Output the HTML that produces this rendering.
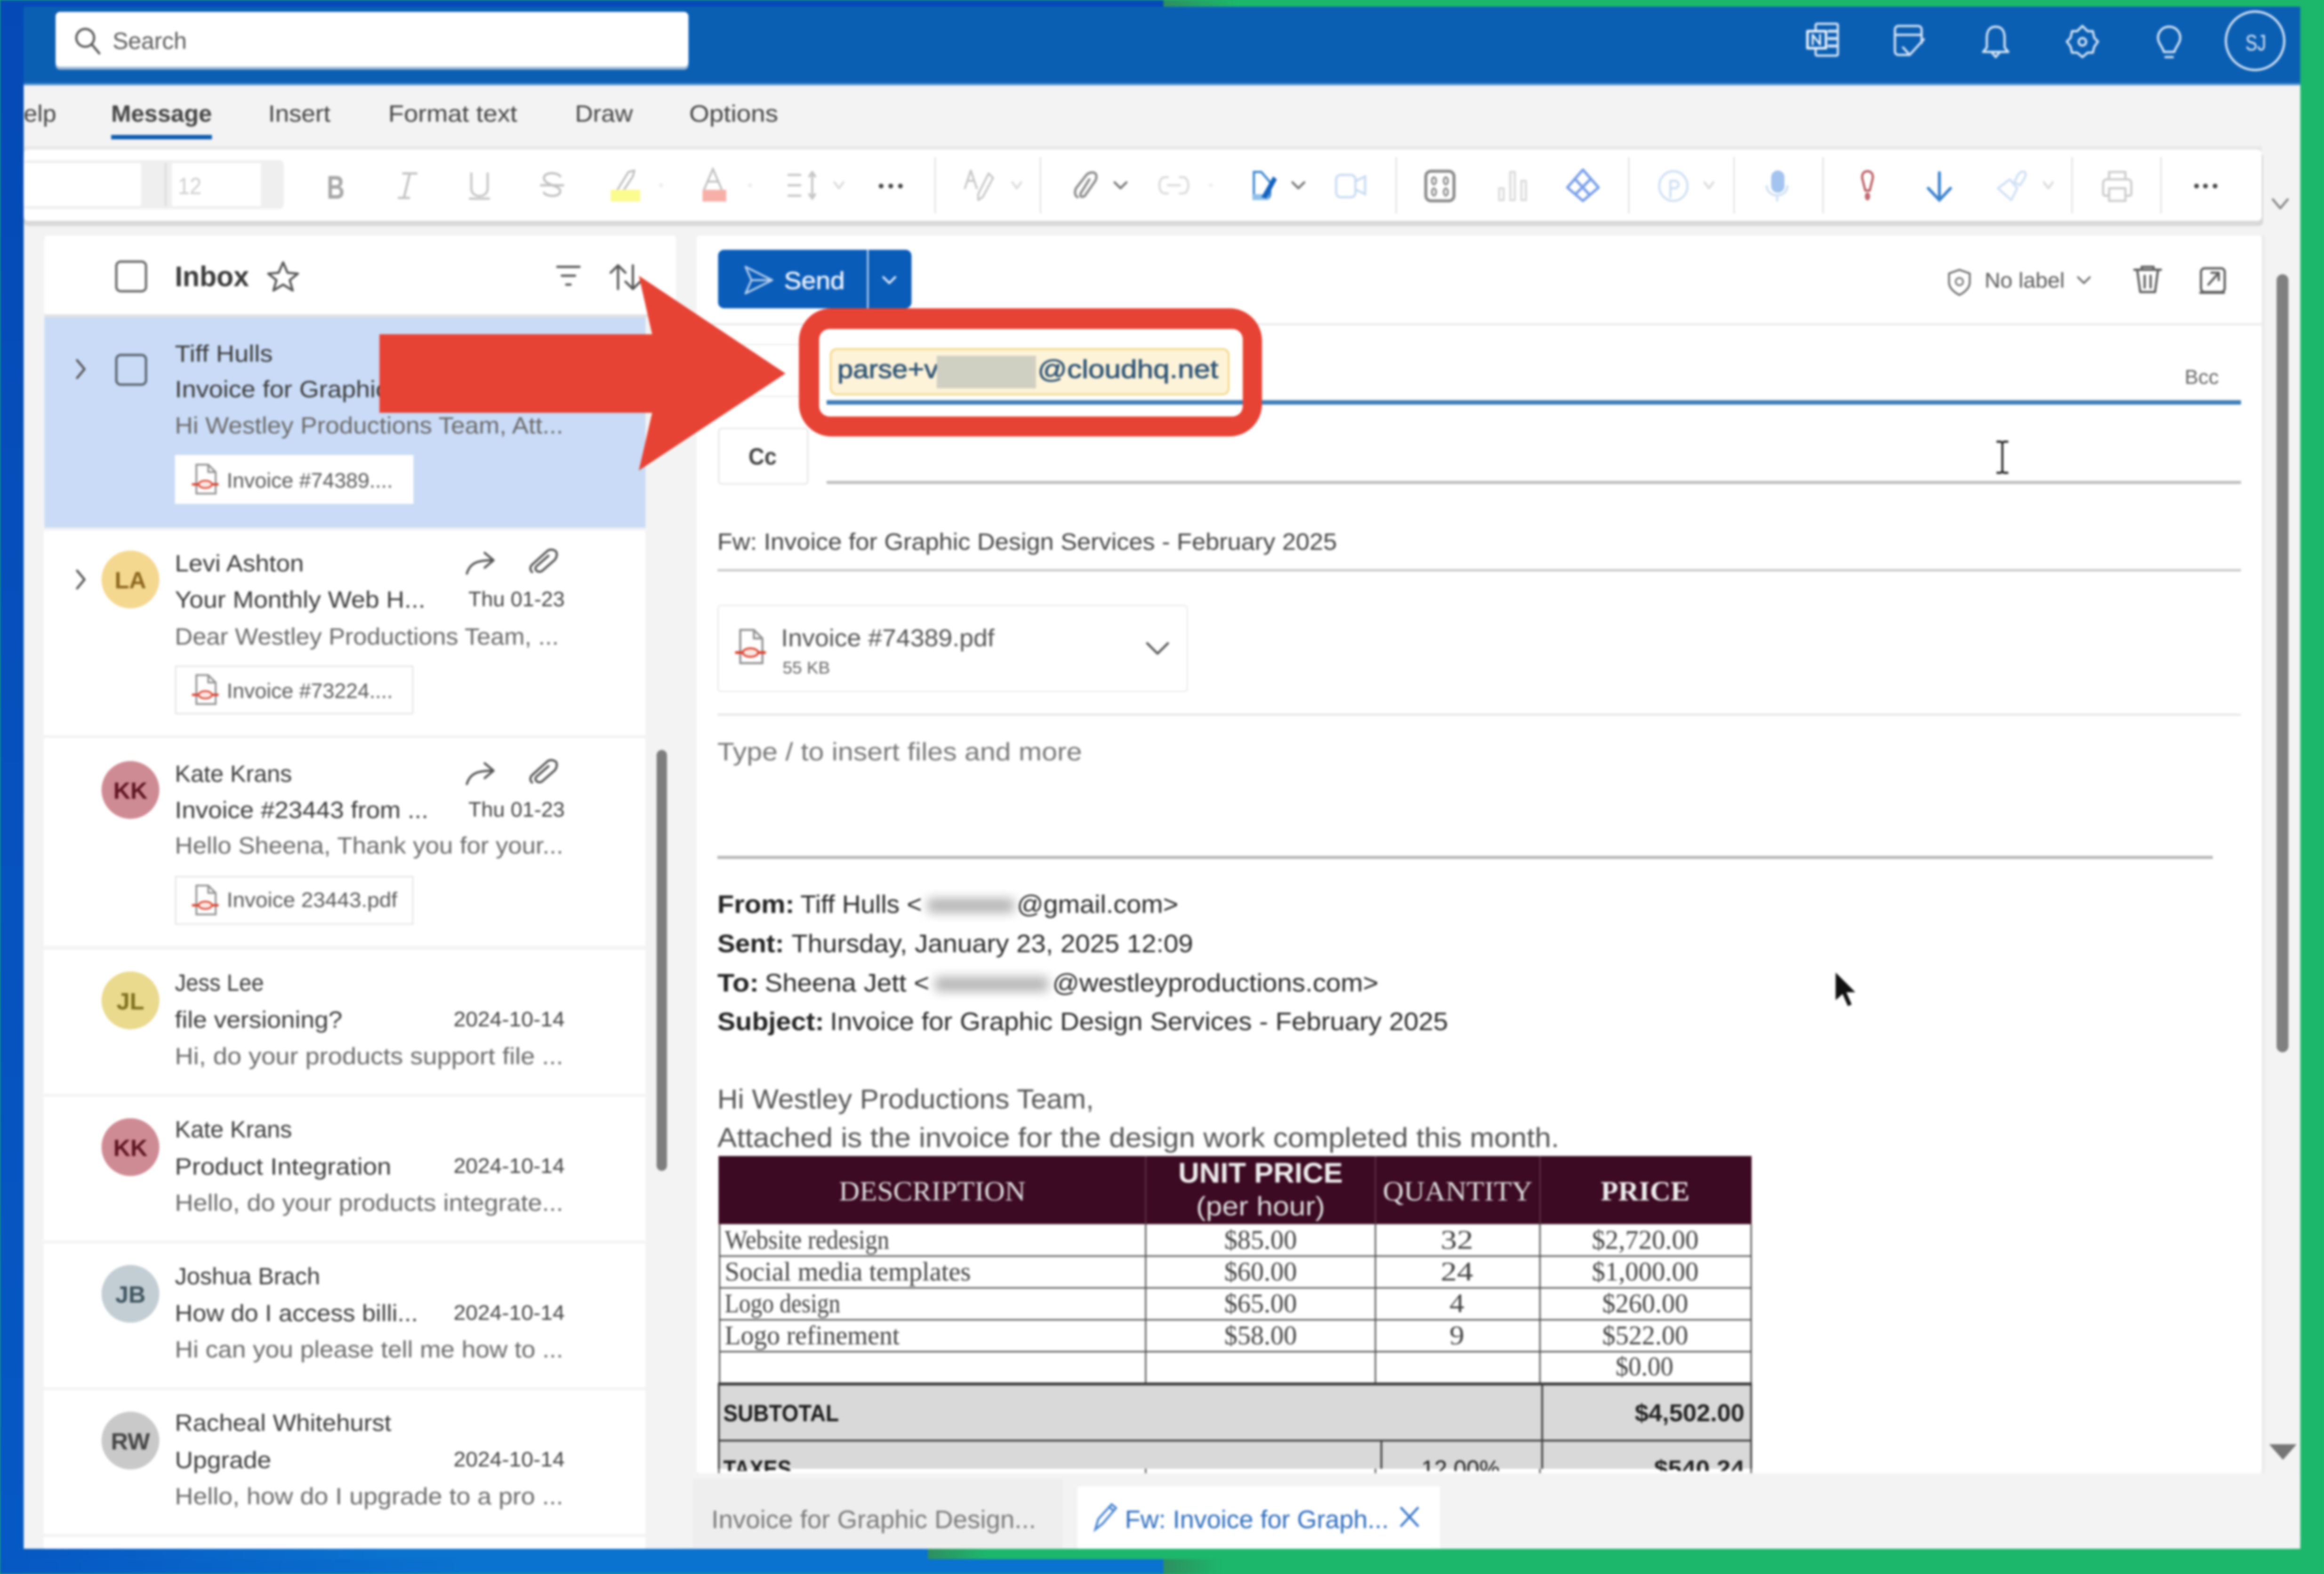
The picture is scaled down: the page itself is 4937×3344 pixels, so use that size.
<!DOCTYPE html>
<html><head><meta charset="utf-8"><title>Outlook compose</title>
<style>
html,body{margin:0;padding:0;width:4937px;height:3344px;overflow:hidden;background:#1cb76b}
svg{display:block;width:4937px;height:3344px;filter:blur(2.4px)}
text{font-family:"Liberation Sans",sans-serif;font-size:16px;fill:#3a3a3a}
.tab{font-size:16px;fill:#444}
.s{font-size:16px;fill:#3b3b3b}
.p{font-size:16px;fill:#6a6a6a}
.c{font-size:14px;fill:#5a5a5a}
.d{font-size:14px;fill:#444}
.av{font-size:16px;font-weight:bold;text-anchor:middle}
.b{font-size:17px;fill:#2a2a2a}
.bb{font-size:17px;font-weight:bold;fill:#222}
.g{font-size:18.5px;fill:#555}
.r{font-family:"Liberation Serif",serif;font-size:18px;fill:#444}
.rc{font-family:"Liberation Serif",serif;font-size:18px;fill:#444}
.h{font-family:"Liberation Serif",serif;font-size:19px;fill:#ddd}
.ic{fill:none;stroke:#555;stroke-width:1.5;stroke-linecap:round;stroke-linejoin:round}
.tb{fill:none;stroke:#b5b5b5;stroke-width:1.5;stroke-linecap:round;stroke-linejoin:round}
.lt{fill:none;stroke:#cfe0f4;stroke-width:1.5;stroke-linecap:round;stroke-linejoin:round}
.gy{fill:none;stroke:#dcdcdc;stroke-width:1.5;stroke-linecap:round;stroke-linejoin:round}
.wh{fill:none;stroke:#d6e5f6;stroke-width:1.5;stroke-linecap:round;stroke-linejoin:round}
.sep{stroke:#e2e2e2;stroke-width:1}
.ln{stroke:#555;stroke-width:1}
</style></head>
<body>
<svg xmlns="http://www.w3.org/2000/svg" viewBox="0 0 1568 1062">
<defs>
<linearGradient id="lf" x1="0" y1="0" x2="0" y2="1"><stop offset="0" stop-color="#0549b6"/><stop offset="1" stop-color="#0658c4"/></linearGradient>
<linearGradient id="bt" x1="0" y1="0" x2="1" y2="0"><stop offset="0" stop-color="#0657c2"/><stop offset="0.4" stop-color="#0a72cf"/><stop offset="1" stop-color="#0a72cf"/></linearGradient>
<linearGradient id="tg" x1="0" y1="0" x2="1" y2="0"><stop offset="0" stop-color="#2e8f60"/><stop offset="1" stop-color="#1cb76b"/></linearGradient>
<filter id="bl" x="-30%" y="-60%" width="160%" height="220%"><feGaussianBlur stdDeviation="3.5"/></filter>
<clipPath id="body"><rect x="470" y="159" width="1056" height="833.500"/></clipPath>
<clipPath id="left"><rect x="16" y="57" width="600" height="40"/></clipPath>
<g id="pdf">
<path d="M3 0h8l5 5v14.500H3z" fill="#fff" stroke="#909090" stroke-width="1.200"/>
<path d="M11 0v5h5" fill="none" stroke="#909090" stroke-width="1.200"/>
<rect x="0" y="12.500" width="18" height="1.600" fill="#d9432f"/>
<ellipse cx="9" cy="13.300" rx="4.500" ry="2.500" fill="#fbe6e2" stroke="#d9432f" stroke-width="1.100"/>
</g>
<g id="fwd"><path class="ic" d="M-9 7C-7 0-2-2 8-2M3-7l6 5-6 5"/></g>
<g id="clip"><path class="ic" d="M-8 7c-2-2-1-4 0-5L2-7c2-2 5-1 6 0s1 4-1 6L-1 6c-1 1-3 1-4 0s-1-2 0-3L3-4"/></g>
</defs>

<!-- backdrop -->
<rect width="1568" height="1062" fill="#1cb76b"/>
<rect x="785" y="0" width="50" height="5" fill="url(#tg)"/>
<rect x="0" y="0" width="785" height="5" fill="#0549b6"/>
<rect x="0" y="0" width="16" height="1062" fill="url(#lf)"/>
<rect x="626" y="1045" width="40" height="7" fill="url(#tg)"/>
<rect x="785" y="1052" width="40" height="10" fill="url(#tg)"/>
<rect x="16" y="1045" width="610" height="7" fill="url(#bt)"/>
<rect x="0" y="1052" width="785" height="10" fill="url(#bt)"/>

<!-- window -->
<rect x="16" y="57" width="1536" height="988" fill="#f3f3f3"/>
<rect x="1546" y="1039" width="6" height="6" fill="#111"/>
<path d="M1552 1039v0a6 6 0 0 1-6 6h-2v-8h8z" fill="#f3f3f3"/>
<rect x="16" y="4.500" width="1536" height="52.500" fill="#0b5fb3"/>
<rect x="16" y="56" width="1536" height="1.500" fill="#4c8fd0"/>

<!-- search -->
<rect x="37.500" y="9" width="427" height="38" rx="3" fill="#9db8d6"/>
<rect x="37.500" y="8" width="427" height="37" rx="3" fill="#fff"/>
<circle cx="57.500" cy="25.500" r="6" class="ic"/><path class="ic" d="M62 30l5 6"/>
<text x="76" y="33" textLength="50" lengthAdjust="spacingAndGlyphs" style="fill:#5c5c5c">Search</text>

<!-- header icons -->
<g class="wh">
<rect x="1225" y="16" width="15" height="21.500" rx="1"/>
<path d="M1234 21h5M1234 26h5M1234 31h5" stroke-width="2"/>
<rect x="1219.500" y="21" width="12.500" height="11.500" fill="#0b5fb3" style="stroke:#eef4fb;stroke-width:1.700"/>
<path d="M1223 30v-6.500l5 6.500v-6.500" style="stroke:#eef4fb;stroke-width:1.300"/>
<path d="M1288 37h-7c-1.500 0-2.500-1-2.500-2.500V20c0-1.500 1-2.500 2.500-2.500h13c1.500 0 2.500 1 2.500 2.500v9M1278.500 23.500h18"/>
<path d="M1284 32l4.500 5 9.500-10.500"/>
<path d="M1346.500 18c-4.500 0-6 3.500-6 7.500v6.500l-2.500 3h17l-2.500-3v-6.500c0-4-1.500-7.500-6-7.500zM1344 35.500l2.500 3 2.500-3"/>
<path d="M1405 17.500l3.500 3.500h3.500l1 4.500 2.500 2.500-2.500 3.500-1 4h-3.500l-3.500 3-3.500-3h-3.500l-1-4-2.500-3.500 2.500-2.500 1-4.500h3.500z"/><circle cx="1405" cy="28.200" r="2.500"/>
<path d="M1463.500 18c-4.500 0-7.500 3.500-7.500 7.500 0 3.500 3 6 4 9.500h7c1-3.500 4-6 4-9.500 0-4-3-7.500-7.500-7.500zM1461 38.500h5"/>
<circle cx="1521.500" cy="27.500" r="19.700"/>
</g>
<text x="1515" y="34" textLength="14" lengthAdjust="spacingAndGlyphs" style="fill:#dbe7f6;font-size:15px">SJ</text>

<!-- tabs -->
<g clip-path="url(#left)">
<text class="tab" x="16" y="82" textLength="22" lengthAdjust="spacingAndGlyphs">elp</text>
<text class="tab" x="75" y="82" textLength="68" lengthAdjust="spacingAndGlyphs" font-weight="bold">Message</text>
<text class="tab" x="181" y="82" textLength="42" lengthAdjust="spacingAndGlyphs">Insert</text>
<text class="tab" x="262" y="82" textLength="87" lengthAdjust="spacingAndGlyphs">Format text</text>
<text class="tab" x="388" y="82" textLength="39" lengthAdjust="spacingAndGlyphs">Draw</text>
<text class="tab" x="465" y="82" textLength="60" lengthAdjust="spacingAndGlyphs">Options</text>
</g>
<rect x="75" y="91" width="68" height="3" fill="#0f5cb0"/>

<!-- toolbar -->
<rect x="16" y="98.500" width="1510" height="4" fill="#e8e8e8"/>
<rect x="16" y="103" width="1511" height="49.500" rx="3" fill="#d8d8d8"/>
<rect x="16" y="101" width="1510" height="48" rx="3" fill="#fff"/>
<rect x="16" y="108" width="175.500" height="33" rx="3" fill="#efefef"/>
<rect x="16" y="110" width="79" height="29" fill="#fff"/>
<rect x="116" y="110" width="60" height="29" fill="#fff"/>
<rect x="111" y="110" width="1.500" height="29" fill="#dedede"/>
<text x="120" y="131" textLength="16" lengthAdjust="spacingAndGlyphs" style="fill:#cfcfcf;font-size:16px">12</text>
<text x="220.500" y="134" style="fill:#a6a6a6;font-size:22px;font-weight:bold" textLength="12" lengthAdjust="spacingAndGlyphs">B</text>
<path class="tb" d="M272 117h9M269 133.500h7M276.500 117l-4 16.500" style="stroke:#c0c0c0"/>
<path class="tb" d="M318 117v10c0 7 11 7 11 0v-10M317 134h13" style="stroke:#c6c6c6"/>
<path class="tb" d="M378 119c-2-3-11-3-11 1 0 5 11 5 11 9 0 4-9 4-11 1M365 125h15" style="stroke:#c0c0c0"/>
<path class="tb" d="M428 115l-4 1-8 13-1 4 4-2 8-12z" style="stroke:#bdbdbd;stroke-width:1.300"/><rect x="412" y="128" width="20" height="8" fill="#fbfb90"/>
<path d="M475 128l6-14 6 14M477.500 122.500h7" fill="none" stroke="#bfbfbf" stroke-width="1.300"/><rect x="474" y="128" width="16" height="8" fill="#f7b0a8"/>
<circle cx="446" cy="125" r="1.500" fill="#eee"/><circle cx="506" cy="125" r="1.500" fill="#eee"/>
<path class="tb" d="M532 118h8M532 125h8M532 132h8M548 116v18M546 119l2-3 2 3M546 131l2 3 2-3" style="stroke:#c6c6c6"/>
<path class="gy" d="M563 123l3 4 3-4"/>
<circle cx="594.500" cy="125.500" r="1.600" fill="#444"/><circle cx="601" cy="125.500" r="1.600" fill="#444"/><circle cx="607.500" cy="125.500" r="1.600" fill="#444"/>
<path class="sep" d="M631 106v38M702 106v38M942 106v38M1099 106v38M1170 106v38M1230 106v38M1398 106v38M1458 106v38"/>
<path class="tb" d="M651 127l4-12 4 12M653 122h4M667 117l3 3-7 13-3 2 0-4z" style="stroke:#c6c6c6;stroke-width:1.300"/>
<path class="gy" d="M683 123l3 4 3-4"/>
<path d="M727 133c-2-1-2-4-1-6l7-9c2-2 5-2 6-1s1 3 0 5l-7 10c-1 1-3 1-3 0s0-2 1-3l5-8" fill="none" stroke="#8a8a8a" stroke-width="1.600" stroke-linecap="round"/>
<path class="ic" style="stroke:#777" d="M752 123l4 4 4-4"/>
<path class="gy" d="M788 119.500h-2c-5 0-5 11 0 11h2M796 119.500h2c5 0 5 11 0 11h-2M788 125h8"/>
<circle cx="817" cy="125" r="1.500" fill="#f0f0f0"/>
<path d="M846 116h5l6 7v7c0 3-1 4-3 4h-8z" fill="#fff" stroke="#3b86cf" stroke-width="1.500"/><path d="M845 131h11v4h-11z" fill="#8fc0ea"/><path d="M851 133l8-14 2.500 2-7 13z" fill="#1462bd"/>
<path class="ic" style="stroke:#777" d="M872 123l4 4 4-4"/>
<rect x="901.500" y="118" width="13" height="15" rx="3" fill="none" stroke="#c8dcf2" stroke-width="1.500"/><path d="M915 122l6-3v12l-6-3" fill="none" stroke="#c8dcf2" stroke-width="1.500"/>
<rect x="962" y="115.500" width="19" height="20" rx="3.500" fill="none" stroke="#888" stroke-width="2"/><g fill="none" stroke="#888" stroke-width="1.200"><ellipse cx="967.500" cy="122" rx="1.400" ry="2.400"/><ellipse cx="975.500" cy="122" rx="1.400" ry="2.400"/><ellipse cx="967.500" cy="129.500" rx="1.400" ry="2.400"/><ellipse cx="975.500" cy="129.500" rx="1.400" ry="2.400"/></g>
<path class="gy" d="M1011.500 127h3v8h-3zM1019 116h3v19h-3zM1026.500 122h3v13h-3z"/>
<path d="M1068 114.500l10.500 12-10.500 9-10.500-9zM1062 120l11 12M1074 120l-11 11" fill="none" stroke="#7ba0e8" stroke-width="1.800" stroke-linejoin="round"/>
<ellipse cx="1129" cy="125.500" rx="9.500" ry="10" class="lt"/><path class="lt" d="M1127 133v-11h3a2.500 2.500 0 0 1 0 5h-3"/>
<path class="gy" d="M1150 123l3 4 3-4"/>
<rect x="1195" y="115" width="9" height="15" rx="4.500" fill="#a3c4ee"/><path d="M1192 125c0 9 14 9 14 0M1199 132v4" fill="none" stroke="#cfe0f4" stroke-width="1.500"/>
<path d="M1260 115.500c-2.500 0-4 2-3.500 5l2 8h3l2-8c.5-3-1-5-3.500-5z" fill="none" stroke="#b85a5f" stroke-width="1.500"/><ellipse cx="1260" cy="132.500" rx="1.800" ry="2.700" fill="#c06a70"/>
<path d="M1308.500 116.500v18M1301 127l7.500 8 7.500-8" fill="none" stroke="#3b82cc" stroke-width="2" stroke-linecap="round"/>
<path class="lt" d="M1366 116c-2-1-4 1-5 3l-2 4 4 2 3-5c1-2 1-3 0-4zM1356 121l-8 6 9 8 4-8z"/>
<path class="gy" d="M1379 123l3 4 3-4"/>
<path class="gy" style="stroke:#cdcdcd" d="M1423 121v-5h11v5M1423 132h-2.500c-1 0-1.500-.5-1.500-1.500v-7c0-1.500 1-2.500 2.500-2.500h14c1.500 0 2.500 1 2.500 2.500v7c0 1-.5 1.500-1.500 1.500H1434M1423 127h11v8.500h-11z"/>
<circle cx="1482" cy="125.500" r="1.600" fill="#444"/><circle cx="1488" cy="125.500" r="1.600" fill="#444"/><circle cx="1494.500" cy="125.500" r="1.600" fill="#444"/>
<path class="ic" style="stroke:#888" d="M1533.500 134.500l5 6 5-6"/>

<!-- LEFT PANE -->
<rect x="30" y="159" width="427" height="886" fill="#f3f3f3"/>
<rect x="30" y="159" width="426" height="54" rx="2" fill="#fff"/>
<rect x="30" y="212" width="426" height="2" fill="#e2e2e2"/>
<rect x="78.500" y="176.500" width="20" height="20" rx="3" fill="#fff" stroke="#6b6b6b" stroke-width="1.600"/>
<text x="118" y="193" textLength="50" lengthAdjust="spacingAndGlyphs" font-weight="bold" style="font-size:19px;fill:#3a3a3a">Inbox</text>
<path class="ic" d="M191 177l3 7 7 .6-5.500 4.400 2 7-6.500-4-6.500 4 2-7-5.500-4.400 7-.6z"/>
<path class="ic" d="M376 180h15M379 186h9M382 192h3" stroke-width="2"/>
<path class="ic" d="M417 195v-16M412 184l5-5 5 5M427 179v16M422 190l5 5 5-5"/>

<rect x="30" y="214" width="405.500" height="142" fill="#c9dbf6"/>
<rect x="29.500" y="358" width="406" height="138" fill="#fff"/>
<rect x="29.500" y="498" width="406" height="140" fill="#fff"/>
<rect x="29.500" y="641" width="406" height="97" fill="#fff"/>
<rect x="29.500" y="740" width="406" height="97" fill="#fff"/>
<rect x="29.500" y="839" width="406" height="97" fill="#fff"/>
<rect x="29.500" y="938" width="406" height="97" fill="#fff"/>
<rect x="29.500" y="1037" width="406" height="8" fill="#fff"/>
<rect x="443" y="506" width="7" height="284" rx="3.500" fill="#7e7e7e"/>

<path class="ic" d="M52 243l5 6-5 6M52 385l5 6-5 6"/>
<rect x="78.500" y="239.500" width="20" height="20" rx="3" fill="none" stroke="#5c6470" stroke-width="1.600"/>

<!-- selected -->
<text class="s" x="118" y="244" textLength="66" lengthAdjust="spacingAndGlyphs">Tiff Hulls</text>
<text class="s" x="118" y="268" textLength="144" lengthAdjust="spacingAndGlyphs">Invoice for Graphic</text>
<text class="p" x="118" y="292.500" textLength="262" lengthAdjust="spacingAndGlyphs">Hi Westley Productions Team, Att...</text>
<rect x="118" y="307" width="161" height="33" fill="#fff"/>
<use href="#pdf" transform="translate(129.500,313.500)"/>
<text class="c" x="153" y="329" textLength="112" lengthAdjust="spacingAndGlyphs">Invoice #74389....</text>

<!-- Levi -->
<circle cx="88" cy="391" r="19.500" fill="#f5d88f"/><text class="av" x="88" y="397" style="fill:#8d661d">LA</text>
<text class="s" x="118" y="385.500" textLength="87" lengthAdjust="spacingAndGlyphs">Levi Ashton</text>
<text class="s" x="118" y="410" textLength="169" lengthAdjust="spacingAndGlyphs">Your Monthly Web H...</text>
<text class="d" x="316" y="409" textLength="65" lengthAdjust="spacingAndGlyphs">Thu 01-23</text>
<text class="p" x="118" y="435" textLength="259" lengthAdjust="spacingAndGlyphs">Dear Westley Productions Team, ...</text>
<use href="#fwd" transform="translate(324,380)"/><use href="#clip" transform="translate(367,379)"/>
<rect x="118.500" y="449.500" width="160" height="32" fill="#fff" stroke="#e6e6e6"/>
<use href="#pdf" transform="translate(129.500,455.500)"/>
<text class="c" x="153" y="471" textLength="112" lengthAdjust="spacingAndGlyphs">Invoice #73224....</text>

<!-- Kate -->
<circle cx="88" cy="533" r="19.500" fill="#cf8b94"/><text class="av" x="88" y="539" style="fill:#5f1522">KK</text>
<text class="s" x="118" y="527.500" textLength="79" lengthAdjust="spacingAndGlyphs">Kate Krans</text>
<text class="s" x="118" y="552" textLength="171" lengthAdjust="spacingAndGlyphs">Invoice #23443 from ...</text>
<text class="d" x="316" y="551" textLength="65" lengthAdjust="spacingAndGlyphs">Thu 01-23</text>
<text class="p" x="118" y="576" textLength="262" lengthAdjust="spacingAndGlyphs">Hello Sheena, Thank you for your...</text>
<use href="#fwd" transform="translate(324,522)"/><use href="#clip" transform="translate(367,521)"/>
<rect x="118.500" y="591.500" width="160" height="32" fill="#fff" stroke="#e6e6e6"/>
<use href="#pdf" transform="translate(129.500,597.500)"/>
<text class="c" x="153" y="612" textLength="115" lengthAdjust="spacingAndGlyphs">Invoice 23443.pdf</text>

<!-- Jess -->
<circle cx="88" cy="675" r="19.500" fill="#e9da8d"/><text class="av" x="88" y="681" style="fill:#7c6f1c">JL</text>
<text class="s" x="118" y="668.500" textLength="60" lengthAdjust="spacingAndGlyphs">Jess Lee</text>
<text class="s" x="118" y="693.500" textLength="113" lengthAdjust="spacingAndGlyphs">file versioning?</text>
<text class="d" x="306" y="692.500" textLength="75" lengthAdjust="spacingAndGlyphs">2024-10-14</text>
<text class="p" x="118" y="718" textLength="262" lengthAdjust="spacingAndGlyphs">Hi, do your products support file ...</text>

<!-- Kate 2 -->
<circle cx="88" cy="774" r="19.500" fill="#cf8b94"/><text class="av" x="88" y="780" style="fill:#5f1522">KK</text>
<text class="s" x="118" y="767.500" textLength="79" lengthAdjust="spacingAndGlyphs">Kate Krans</text>
<text class="s" x="118" y="792.500" textLength="146" lengthAdjust="spacingAndGlyphs">Product Integration</text>
<text class="d" x="306" y="791.500" textLength="75" lengthAdjust="spacingAndGlyphs">2024-10-14</text>
<text class="p" x="118" y="817" textLength="262" lengthAdjust="spacingAndGlyphs">Hello, do your products integrate...</text>

<!-- Joshua -->
<circle cx="88" cy="873" r="19.500" fill="#c3ced4"/><text class="av" x="88" y="879" style="fill:#3f5560">JB</text>
<text class="s" x="118" y="866.500" textLength="98" lengthAdjust="spacingAndGlyphs">Joshua Brach</text>
<text class="s" x="118" y="891.500" textLength="164" lengthAdjust="spacingAndGlyphs">How do I access billi...</text>
<text class="d" x="306" y="890.500" textLength="75" lengthAdjust="spacingAndGlyphs">2024-10-14</text>
<text class="p" x="118" y="916" textLength="262" lengthAdjust="spacingAndGlyphs">Hi can you please tell me how to ...</text>

<!-- Racheal -->
<circle cx="88" cy="972" r="19.500" fill="#c9c9c9"/><text class="av" x="88" y="978" style="fill:#444">RW</text>
<text class="s" x="118" y="965.500" textLength="146" lengthAdjust="spacingAndGlyphs">Racheal Whitehurst</text>
<text class="s" x="118" y="990.500" textLength="65" lengthAdjust="spacingAndGlyphs">Upgrade</text>
<text class="d" x="306" y="989.500" textLength="75" lengthAdjust="spacingAndGlyphs">2024-10-14</text>
<text class="p" x="118" y="1015" textLength="262" lengthAdjust="spacingAndGlyphs">Hello, how do I upgrade to a pro ...</text>

<!-- COMPOSE -->
<rect x="470" y="159" width="1056" height="835" rx="2" fill="#fff"/>
<rect x="470" y="218" width="1056" height="1.500" fill="#ececec"/>
<rect x="484.500" y="168.500" width="130.500" height="39.500" rx="4" fill="#0a5cb9"/>
<rect x="585" y="168.500" width="1" height="39.500" fill="#cfe0f3"/>
<path class="wh" d="M503 180l18 9-18 9 4-9zM507 189h14" style="stroke-width:1.300;stroke:#b5d0ec"/>
<text x="529" y="195" textLength="41" lengthAdjust="spacingAndGlyphs" style="fill:#e8f0fa;font-size:16.500px;stroke:#e8f0fa;stroke-width:.3">Send</text>
<path class="wh" d="M596 187l4 4 4-4"/>

<path class="ic" style="stroke:#666;stroke-width:1.200" d="M1322 182l7 2.500v6c0 4-4 7-7 8.500-3-1.500-7-4.500-7-8.500v-6z"/><circle cx="1322" cy="190" r="2.500" fill="none" stroke="#666"/>
<text x="1339" y="194" textLength="54" lengthAdjust="spacingAndGlyphs" style="font-size:14.500px;fill:#5a5a5a">No label</text>
<path class="ic" style="stroke:#666;stroke-width:1.200" d="M1402 187l4 4 4-4"/>
<path class="ic" style="stroke:#5c5c5c" d="M1440 182h18M1445 182v-2h8v2M1442 182l2 15h10l2-15M1447 186v8M1451 186v8"/>
<rect x="1485" y="181" width="16" height="16" rx="2.500" class="ic" style="stroke:#5c5c5c"/><path class="ic" style="stroke:#5c5c5c" d="M1490 192l7-8M1492 184h5v5M1484.500 197.500h16"/>

<!-- fields -->
<rect x="484.500" y="232.500" width="60" height="35" rx="2" fill="#fff" stroke="#eeeeee"/>
<rect x="485" y="289" width="60" height="37.500" rx="2" fill="#fff" stroke="#e7e7e7"/>
<text x="505" y="313.500" textLength="19" lengthAdjust="spacingAndGlyphs" font-weight="bold" style="fill:#444;font-size:16px">Cc</text>
<rect x="557.700" y="270" width="954.300" height="3" fill="#3f7db8"/>
<text x="1474" y="259" textLength="23" lengthAdjust="spacingAndGlyphs" style="font-size:13.500px;fill:#666">Bcc</text>
<rect x="557.700" y="324.500" width="954.300" height="2" fill="#bdbdbd"/>
<path d="M1347 298h3l1 1 1-1h3M1351 299v19M1347 319h3l1-1 1 1h3" fill="none" stroke="#222" stroke-width="1.400"/>
<text x="484" y="371" textLength="418" lengthAdjust="spacingAndGlyphs" style="fill:#444">Fw: Invoice for Graphic Design Services - February 2025</text>
<rect x="484" y="384" width="1028" height="1.500" fill="#c6c6c6"/>

<rect x="484.500" y="408.500" width="316.500" height="58" rx="2" fill="#fff" stroke="#ededed"/>
<use href="#pdf" transform="translate(496,425)scale(1.150)"/>
<text x="527" y="436" textLength="144" lengthAdjust="spacingAndGlyphs" style="fill:#555;font-size:16.500px">Invoice #74389.pdf</text>
<text x="528" y="454.500" textLength="32" lengthAdjust="spacingAndGlyphs" style="fill:#666;font-size:11.500px">55 KB</text>
<path class="ic" d="M774 434l7 7 7-7"/>
<rect x="484" y="481.500" width="1028" height="1.500" fill="#e9e9e9"/>
<text x="484" y="513" textLength="246" lengthAdjust="spacingAndGlyphs" style="fill:#777;font-size:17px">Type / to insert files and more</text>
<rect x="484" y="577.500" width="1009" height="2" fill="#b5b5b5"/>

<!-- quoted -->
<text class="bb" x="484" y="616" textLength="52" lengthAdjust="spacingAndGlyphs">From:</text>
<text class="b" x="540" y="616" textLength="82" lengthAdjust="spacingAndGlyphs">Tiff Hulls &lt;</text>
<rect x="626" y="606" width="58" height="10" fill="#b5b5b5" filter="url(#bl)"/>
<text class="b" x="686" y="616" textLength="109" lengthAdjust="spacingAndGlyphs">@gmail.com&gt;</text>
<text class="bb" x="484" y="642.500" textLength="45" lengthAdjust="spacingAndGlyphs">Sent:</text>
<text class="b" x="534" y="642.500" textLength="271" lengthAdjust="spacingAndGlyphs">Thursday, January 23, 2025 12:09</text>
<text class="bb" x="484" y="669" textLength="28" lengthAdjust="spacingAndGlyphs">To:</text>
<text class="b" x="516" y="669" textLength="111" lengthAdjust="spacingAndGlyphs">Sheena Jett &lt;</text>
<rect x="631" y="659" width="76" height="10" fill="#b5b5b5" filter="url(#bl)"/>
<text class="b" x="710" y="669" textLength="220" lengthAdjust="spacingAndGlyphs">@westleyproductions.com&gt;</text>
<text class="bb" x="484" y="695" textLength="72" lengthAdjust="spacingAndGlyphs">Subject:</text>
<text class="b" x="560" y="695" textLength="417" lengthAdjust="spacingAndGlyphs">Invoice for Graphic Design Services - February 2025</text>
<text class="g" x="484" y="748" textLength="254" lengthAdjust="spacingAndGlyphs">Hi Westley Productions Team,</text>
<text class="g" x="484" y="774" textLength="568" lengthAdjust="spacingAndGlyphs">Attached is the invoice for the design work completed this month.</text>

<!-- invoice table -->
<path d="M485 985v9M773 990v4M928 990v4M1039 990v4M1181.500 985v9" stroke="#555" stroke-width="1"/>
<g clip-path="url(#body)">
<rect x="484.800" y="780" width="697" height="46" fill="#3c0a22"/>
<path d="M773 780v46M928 780v46M1039 780v46" stroke="#5a3044" stroke-width="1"/>
<text class="h" x="566" y="810" textLength="126" lengthAdjust="spacingAndGlyphs">DESCRIPTION</text>
<text x="795" y="798" textLength="111" lengthAdjust="spacingAndGlyphs" font-weight="bold" style="fill:#eee;font-size:19px">UNIT PRICE</text>
<text x="807" y="820" textLength="87" lengthAdjust="spacingAndGlyphs" style="fill:#ddd;font-size:18px">(per hour)</text>
<text class="h" x="933" y="810" textLength="101" lengthAdjust="spacingAndGlyphs">QUANTITY</text>
<text class="h" x="1080" y="810" textLength="60" lengthAdjust="spacingAndGlyphs" font-weight="bold" style="fill:#eee">PRICE</text>
<rect x="485" y="826" width="696.500" height="107.500" fill="#fff"/>
<path class="ln" d="M485.500 826v107M773 826v107M928 826v107M1039 826v107M1181.500 826v107M485 847.500h697M485 869h697M485 890.500h697M485 912h697" stroke="#555"/>

<text class="r" x="489" y="842.500" textLength="111" lengthAdjust="spacingAndGlyphs">Website redesign</text>
<text class="rc" x="826" y="842.500" textLength="49" lengthAdjust="spacingAndGlyphs">$85.00</text>
<text class="rc" x="972" y="842.500" textLength="22" lengthAdjust="spacingAndGlyphs">32</text>
<text class="rc" x="1074" y="842.500" textLength="72" lengthAdjust="spacingAndGlyphs">$2,720.00</text>

<text class="r" x="489" y="864" textLength="166" lengthAdjust="spacingAndGlyphs">Social media templates</text>
<text class="rc" x="826" y="864" textLength="49" lengthAdjust="spacingAndGlyphs">$60.00</text>
<text class="rc" x="972" y="864" textLength="22" lengthAdjust="spacingAndGlyphs">24</text>
<text class="rc" x="1074" y="864" textLength="72" lengthAdjust="spacingAndGlyphs">$1,000.00</text>

<text class="r" x="489" y="885.500" textLength="78" lengthAdjust="spacingAndGlyphs">Logo design</text>
<text class="rc" x="826" y="885.500" textLength="49" lengthAdjust="spacingAndGlyphs">$65.00</text>
<text class="rc" x="978" y="885.500" textLength="10" lengthAdjust="spacingAndGlyphs">4</text>
<text class="rc" x="1081" y="885.500" textLength="58" lengthAdjust="spacingAndGlyphs">$260.00</text>

<text class="r" x="489" y="907" textLength="118" lengthAdjust="spacingAndGlyphs">Logo refinement</text>
<text class="rc" x="826" y="907" textLength="49" lengthAdjust="spacingAndGlyphs">$58.00</text>
<text class="rc" x="978" y="907" textLength="10" lengthAdjust="spacingAndGlyphs">9</text>
<text class="rc" x="1081" y="907" textLength="58" lengthAdjust="spacingAndGlyphs">$522.00</text>

<text class="rc" x="1090" y="928" textLength="39" lengthAdjust="spacingAndGlyphs">$0.00</text>

<rect x="484.800" y="933.500" width="697" height="57.500" fill="#d9d9d9"/>
<path d="M484.800 972h697M485 933v58M1181.500 933v58M1040.500 933v58M932 972v19" stroke="#444" stroke-width="1.300" fill="none"/>
<rect x="484.800" y="932.800" width="697" height="2" fill="#3a3a3a"/>
<text x="488" y="959" textLength="78" lengthAdjust="spacingAndGlyphs" font-weight="bold" style="fill:#1c1c1c;font-size:16px">SUBTOTAL</text>
<text x="1103" y="959" textLength="74" lengthAdjust="spacingAndGlyphs" font-weight="bold" style="fill:#222;font-size:16.500px">$4,502.00</text>
<text x="488" y="996.500" textLength="46" lengthAdjust="spacingAndGlyphs" font-weight="bold" style="fill:#1c1c1c;font-size:16px">TAXES</text>
<text x="959" y="996.500" textLength="53" lengthAdjust="spacingAndGlyphs" style="fill:#222;font-size:16px">12.00%</text>
<text x="1116" y="996.500" textLength="61" lengthAdjust="spacingAndGlyphs" font-weight="bold" style="fill:#222;font-size:16px">$540.24</text>
</g>

<!-- compose scrollbar -->
<rect x="1526" y="159" width="2" height="835" fill="#ebebeb"/>
<rect x="1536" y="185" width="8" height="525" rx="4" fill="#808080"/>
<path d="M1531 974.500h18.500l-9.200 10.500z" fill="#767676"/>

<!-- bottom tabs -->
<rect x="470" y="994.500" width="1082" height="50.500" fill="#f3f3f3"/>
<rect x="467.500" y="998" width="249.500" height="47" fill="#eeeeee"/>
<text x="480" y="1031" textLength="219" lengthAdjust="spacingAndGlyphs" style="fill:#7a7a7a;font-size:17px">Invoice for Graphic Design...</text>
<rect x="727" y="1003" width="244.500" height="42" fill="#fff"/>
<path d="M739 1032l2-7 9-10 3 2.500-9 10.500zM748.500 1017l3 2.500" fill="none" stroke="#4a86cf" stroke-width="1.400"/>
<text x="759" y="1031" textLength="178" lengthAdjust="spacingAndGlyphs" style="fill:#2e6dbb;font-size:17px">Fw: Invoice for Graph...</text>
<path d="M945 1017l12 13M957 1017l-12 13" stroke="#3a79c8" stroke-width="1.500" fill="none"/>

<!-- ANNOTATION -->
<path fill="#e64335" d="M561 208h268a22 22 0 0 1 22.500 22v42a22 22 0 0 1-22.500 22.500H561a22 22 0 0 1-22-22.500v-42a22 22 0 0 1 22-22z"/>
<rect x="552.700" y="222" width="285.800" height="59" rx="7" fill="#fff"/>
<rect x="560.500" y="235.500" width="268.500" height="30.500" rx="4" fill="#fdf3d9" stroke="#f4dd98" stroke-width="1.500"/>
<text x="565" y="255" textLength="68" lengthAdjust="spacingAndGlyphs" style="fill:#2f5575;font-size:17.500px;stroke:#2f5575;stroke-width:.35">parse+v</text>
<text x="700" y="255" textLength="122" lengthAdjust="spacingAndGlyphs" style="fill:#2f5575;font-size:17.500px;stroke:#2f5575;stroke-width:.35">@cloudhq.net</text>
<rect x="632" y="240" width="67" height="22" fill="#d0d0c2"/>
<rect x="557.700" y="270" width="280.800" height="3" fill="#3f7db8"/>
<polygon fill="#e64335" points="256,225.500 440,225.500 431,186 530,252 431,317.500 440,278.500 256,278.500"/>

<!-- mouse cursor -->
<path d="M1238 655v21l5-4.500 3.500 8 3.500-1.500-3.500-8h6.500z" fill="#111" stroke="#fff" stroke-width="1"/>
</svg>
</body></html>
